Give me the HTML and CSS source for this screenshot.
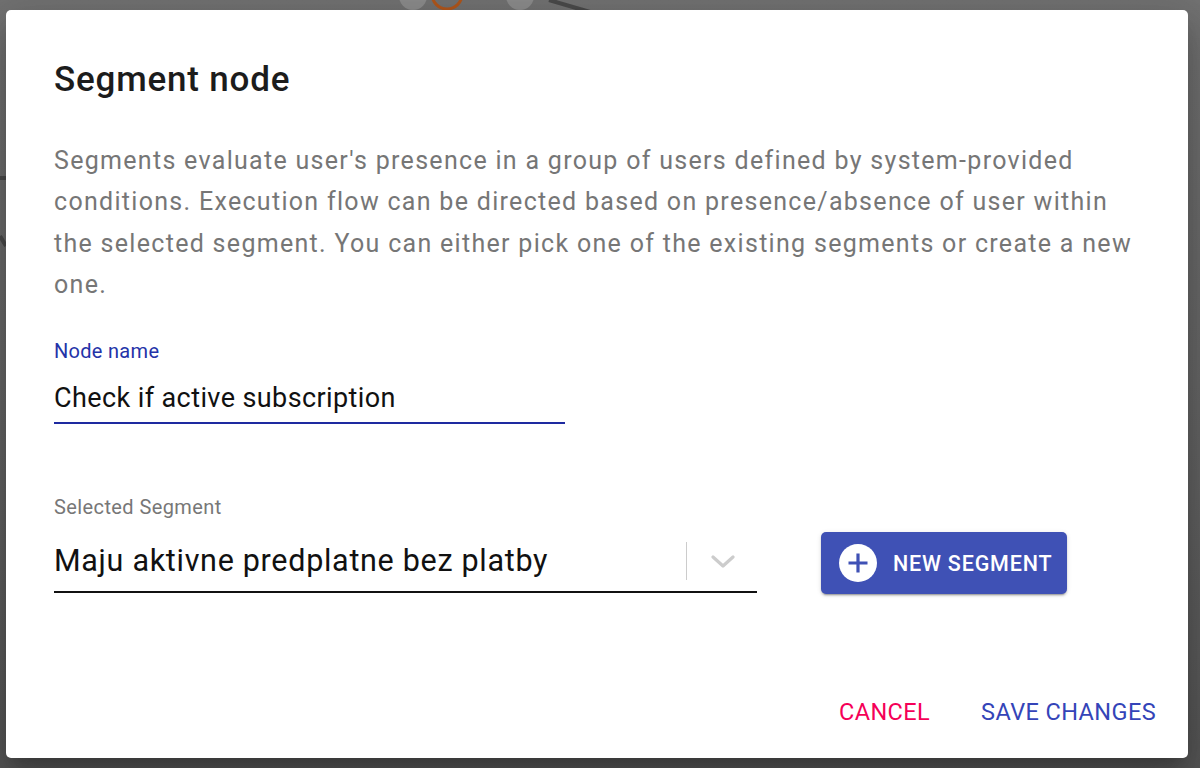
FILE: index.html
```html
<!DOCTYPE html>
<html lang="en">
<head>
<meta charset="utf-8">
<title>Segment node</title>
<link rel="stylesheet" href="styles.css">
</head>
<body>
<svg class="canvas" width="1200" height="768" viewBox="0 0 1200 768" aria-hidden="true">
  <circle cx="413" cy="-4" r="14" fill="#8c8c8c"/>
  <circle cx="520" cy="-4" r="14" fill="#8c8c8c"/>
  <circle cx="447" cy="-6" r="15" fill="none" stroke="#b0561c" stroke-width="3"/>
  <line x1="549" y1="0" x2="590" y2="12" stroke="#4a4a4a" stroke-width="4"/>
  <line x1="0" y1="178" x2="6" y2="178" stroke="#4a4a4a" stroke-width="4"/>
  <line x1="0" y1="236" x2="6" y2="246" stroke="#4a4a4a" stroke-width="4"/>
</svg>
<div class="backdrop">
  <div class="dialog">
    <h2 class="title">Segment node</h2>
    <p class="desc">Segments evaluate user's presence in a group of users defined by system-provided conditions. Execution flow can be directed based on presence/absence of user within the selected segment. You can either pick one of the existing segments or create a new one.</p>

    <div class="field name-field">
      <label class="label focused">Node name</label>
      <div class="input">Check if active subscription</div>
    </div>

    <div class="segment-row">
      <div class="field select-field">
        <label class="label">Selected Segment</label>
        <div class="select">
          <span class="select-value">Maju aktivne predplatne bez platby</span>
          <span class="select-indicators">
            <span class="sep"></span>
            <svg class="chevron" width="24" height="14" viewBox="0 0 24 14"><path d="M2 2 L12 11 L22 2" fill="none" stroke="#cccccc" stroke-width="3.2" stroke-linecap="round" stroke-linejoin="round"/></svg>
          </span>
        </div>
      </div>
      <button class="new-btn" type="button">
        <svg class="plus" width="38" height="38" viewBox="0 0 38 38"><circle cx="19" cy="19" r="19" fill="#ffffff"/><path d="M19 9.5 V28.5 M9.5 19 H28.5" stroke="#3f51b5" stroke-width="3.2"/></svg>
        <span>NEW SEGMENT</span>
      </button>
    </div>

    <div class="footer">
      <button class="text-btn cancel" type="button">CANCEL</button>
      <button class="text-btn save" type="button">SAVE CHANGES</button>
    </div>
  </div>
</div>
</body>
</html>
```

FILE: styles.css
```css
html, body {
  margin: 0;
  padding: 0;
}
body {
  width: 1200px;
  height: 768px;
  overflow: hidden;
  background: linear-gradient(180deg, #727272 0%, #666666 50%, #555555 100%);
  font-family: Roboto, "Liberation Sans", Arial, sans-serif;
  position: relative;
}
.canvas {
  position: absolute;
  left: 0;
  top: 0;
}
.backdrop {
  position: relative;
  padding: 10px 12px 10px 6px;
  height: 748px;
}
.dialog {
  background: #ffffff;
  border-radius: 5px;
  height: 748px;
  box-sizing: border-box;
  padding: 49px 48px 0 48px;
  display: flex;
  flex-direction: column;
  box-shadow: 0 11px 15px -7px rgba(0,0,0,0.2), 0 24px 38px 3px rgba(0,0,0,0.14), 0 9px 46px 8px rgba(0,0,0,0.12);
}
.title {
  margin: 0;
  font-size: 35px;
  line-height: 42px;
  font-weight: 500;
  color: #1c1c1c;
  letter-spacing: 0.8px;
}
.desc {
  margin: 39px 0 0 0;
  font-size: 25px;
  line-height: 41.3px;
  color: #767676;
  letter-spacing: 1.3px;
}
.field {
  display: flex;
  flex-direction: column;
}
.label {
  font-size: 20px;
  line-height: 24px;
  color: #777777;
  letter-spacing: 0.4px;
}
.label.focused {
  color: #2433a8;
  letter-spacing: 0.3px;
}
.name-field {
  margin-top: 34px;
  width: 511px;
}
.input {
  margin-top: 19px;
  font-size: 27px;
  line-height: 32px;
  color: #111111;
  letter-spacing: 0.4px;
  padding-bottom: 8px;
  border-bottom: 2.5px solid #1e2aa0;
}
.segment-row {
  margin-top: 71px;
  display: flex;
  align-items: flex-end;
  gap: 64px;
}
.select-field {
  width: 703px;
}
.select {
  margin-top: 12px;
  height: 60px;
  display: flex;
  align-items: center;
  border-bottom: 2.5px solid #111111;
  box-sizing: content-box;
}
.select-value {
  flex: 1;
  font-size: 30.5px;
  line-height: 60px;
  color: #111111;
  letter-spacing: 0.7px;
}
.select-indicators {
  display: flex;
  align-items: center;
  height: 100%;
}
.sep {
  width: 1.5px;
  height: 38px;
  background: #cccccc;
  margin-right: 24px;
}
.chevron {
  margin-right: 22px;
  margin-top: 2px;
}
.new-btn {
  width: 246px;
  height: 62px;
  margin-bottom: -1px;
  border: none;
  border-radius: 5px;
  background: #3f51b5;
  color: #ffffff;
  display: flex;
  align-items: center;
  padding: 0 0 0 18px;
  gap: 16px;
  font-family: inherit;
  font-size: 21.5px;
  font-weight: 500;
  letter-spacing: 0.8px;
  box-shadow: 0 3px 1px -2px rgba(0,0,0,0.2), 0 2px 2px 0 rgba(0,0,0,0.14), 0 1px 5px 0 rgba(0,0,0,0.12);
}
.plus {
  flex: none;
}
.footer {
  margin-top: auto;
  margin-right: -16px;
  padding-bottom: 32px;
  display: flex;
  justify-content: flex-end;
  gap: 51px;
}
.text-btn {
  border: none;
  background: none;
  padding: 0;
  font-family: inherit;
  font-size: 23.5px;
  line-height: 28px;
  font-weight: 400;
  letter-spacing: 0.4px;
}
.cancel {
  color: #f50057;
}
.save {
  color: #3444b8;
}
```
